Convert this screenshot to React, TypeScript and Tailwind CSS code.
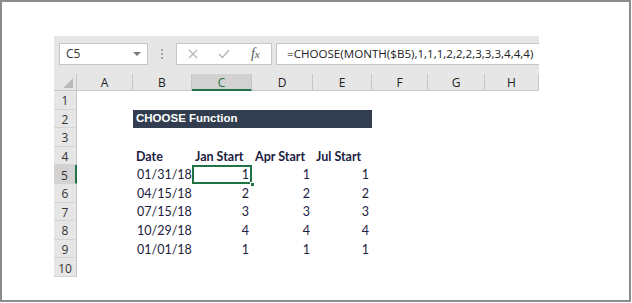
import React from "react";

const rows = [
  { n: 1 },
  { n: 2, title: true },
  { n: 3 },
  { n: 4, head: ["Date", "Jan Start", "Apr Start", "Jul Start"] },
  { n: 5, data: ["01/31/18", "1", "1", "1"] },
  { n: 6, data: ["04/15/18", "2", "2", "2"] },
  { n: 7, data: ["07/15/18", "3", "3", "3"] },
  { n: 8, data: ["10/29/18", "4", "4", "4"] },
  { n: 9, data: ["01/01/18", "1", "1", "1"] },
  { n: 10 },
];

const cols = ["A", "B", "C", "D", "E", "F", "G", "H"];

const cellFont = "font-['Lato','Open_Sans',sans-serif] text-[12.5px] text-[#1c2140]";

function Toolbar() {
  return (
    <div className="flex h-[38px] items-start bg-[#e6e6e6] pt-[7px] pl-[5px] font-['Open_Sans',sans-serif] text-[12px] text-[#333]">
      <div className="flex h-[22px] w-[89px] items-center justify-between border border-[#c6c6c6] bg-white pr-[6px] pl-[6px]">
        <span>C5</span>
        <svg width="8" height="5" viewBox="0 0 8 5">
          <path d="M0 0 L8 0 L4 4 Z" fill="#7a7a7a" />
        </svg>
      </div>
      <div className="flex h-[22px] w-[28px] flex-col items-center justify-center gap-[2px]">
        <span className="h-[2px] w-[2px] bg-[#a6a6a6]" />
        <span className="h-[2px] w-[2px] bg-[#a6a6a6]" />
        <span className="h-[2px] w-[2px] bg-[#a6a6a6]" />
      </div>
      <div className="flex h-[22px] w-[96px] items-center border border-[#c6c6c6] bg-white">
        <div className="flex w-[32px] justify-center">
          <svg width="10" height="10" viewBox="0 0 10 10">
            <path d="M1 1 L9 9 M9 1 L1 9" stroke="#b4b4b4" strokeWidth="1.2" />
          </svg>
        </div>
        <div className="flex w-[32px] justify-center">
          <svg width="12" height="10" viewBox="0 0 12 10">
            <path d="M1 5 L4.5 8.5 L11 1" stroke="#b4b4b4" strokeWidth="1.4" fill="none" />
          </svg>
        </div>
        <div className="flex w-[32px] items-baseline justify-center font-['Liberation_Serif',serif] text-[14px] leading-none italic text-[#555]">
          f<span className="text-[11px]">x</span>
        </div>
      </div>
      <div className="ml-[4px] flex h-[22px] flex-1 items-center border-y border-l border-[#c6c6c6] bg-white pl-[10px] text-[11.6px] text-[#222]">
        =CHOOSE(MONTH($B5),1,1,1,2,2,2,3,3,3,4,4,4)
      </div>
    </div>
  );
}

function HeaderRow() {
  return (
    <>
      <div className="relative h-[17px] border-b border-r border-[#c6c6c6] bg-[#e6e6e6]">
        <svg className="absolute right-[3px] bottom-[2px]" width="10" height="10" viewBox="0 0 10 10">
          <path d="M10 0 L10 10 L0 10 Z" fill="#b9b9b9" />
        </svg>
      </div>
      {cols.map((c) =>
        c === "C" ? (
          <div
            key={c}
            className="flex h-[17px] items-center justify-center border-b-2 border-r border-b-[#217346] border-r-[#c6c6c6] bg-[#d2d2d2] pt-[2px] font-['Open_Sans',sans-serif] text-[12px] text-[#217346]"
          >
            {c}
          </div>
        ) : (
          <div
            key={c}
            className="flex h-[17px] items-center justify-center border-b border-r border-[#c6c6c6] bg-[#e6e6e6] pt-[2px] font-['Open_Sans',sans-serif] text-[12px] text-[#222]"
          >
            {c}
          </div>
        )
      )}
    </>
  );
}

function RowHeader({ n }: { n: number }) {
  if (n === 5) {
    return (
      <div className="flex items-center justify-center border-b border-r-2 border-b-[#d4d4d4] border-r-[#217346] bg-[#d2d2d2] pt-[3px] font-['Open_Sans',sans-serif] text-[12px] text-[#333]">
        {n}
      </div>
    );
  }
  return (
    <div className="flex items-center justify-center border-b border-r border-b-[#d4d4d4] border-r-[#c6c6c6] bg-[#e6e6e6] pt-[3px] font-['Open_Sans',sans-serif] text-[12px] text-[#333]">
      {n}
    </div>
  );
}

export default function App() {
  return (
    <div className="h-[302px] w-[631px] border-2 border-[#8c8c8c] bg-white pt-[34px] pl-[52px]">
      <div className="w-[485px]">
        <Toolbar />
        <div className="grid grid-cols-[23px_56px_59px_60px_61px_59px_56px_57px_54px] grid-rows-[17px_repeat(10,18.6px)]">
          <HeaderRow />
          {rows.map((r) => (
            <React.Fragment key={r.n}>
              <RowHeader n={r.n} />
              <div />
              {r.title ? (
                <div className="col-span-4 flex items-center bg-[#323e4f] pl-[3px] font-['Liberation_Sans',sans-serif] text-[11.5px] font-bold text-white">
                  CHOOSE Function
                </div>
              ) : r.head ? (
                r.head.map((h) => (
                  <div key={h} className={`flex items-center pt-[2px] pl-[3px] font-bold whitespace-nowrap ${cellFont}`}>
                    {h}
                  </div>
                ))
              ) : r.data ? (
                r.data.map((d, i) => (
                  <div
                    key={i}
                    className={`relative flex items-center pt-[2px] ${i === 0 ? "pl-[4px]" : "justify-end pr-[3px]"} ${cellFont}`}
                  >
                    {d}
                    {r.n === 5 && i === 1 && (
                      <>
                        <div className="absolute inset-0 border-2 border-[#217346]" />
                        <div className="absolute right-[-3px] bottom-[-3px] h-[5px] w-[5px] border border-white bg-[#217346]" />
                      </>
                    )}
                  </div>
                ))
              ) : (
                <div className="col-span-4" />
              )}
              <div className="col-span-3" />
            </React.Fragment>
          ))}
        </div>
      </div>
    </div>
  );
}
